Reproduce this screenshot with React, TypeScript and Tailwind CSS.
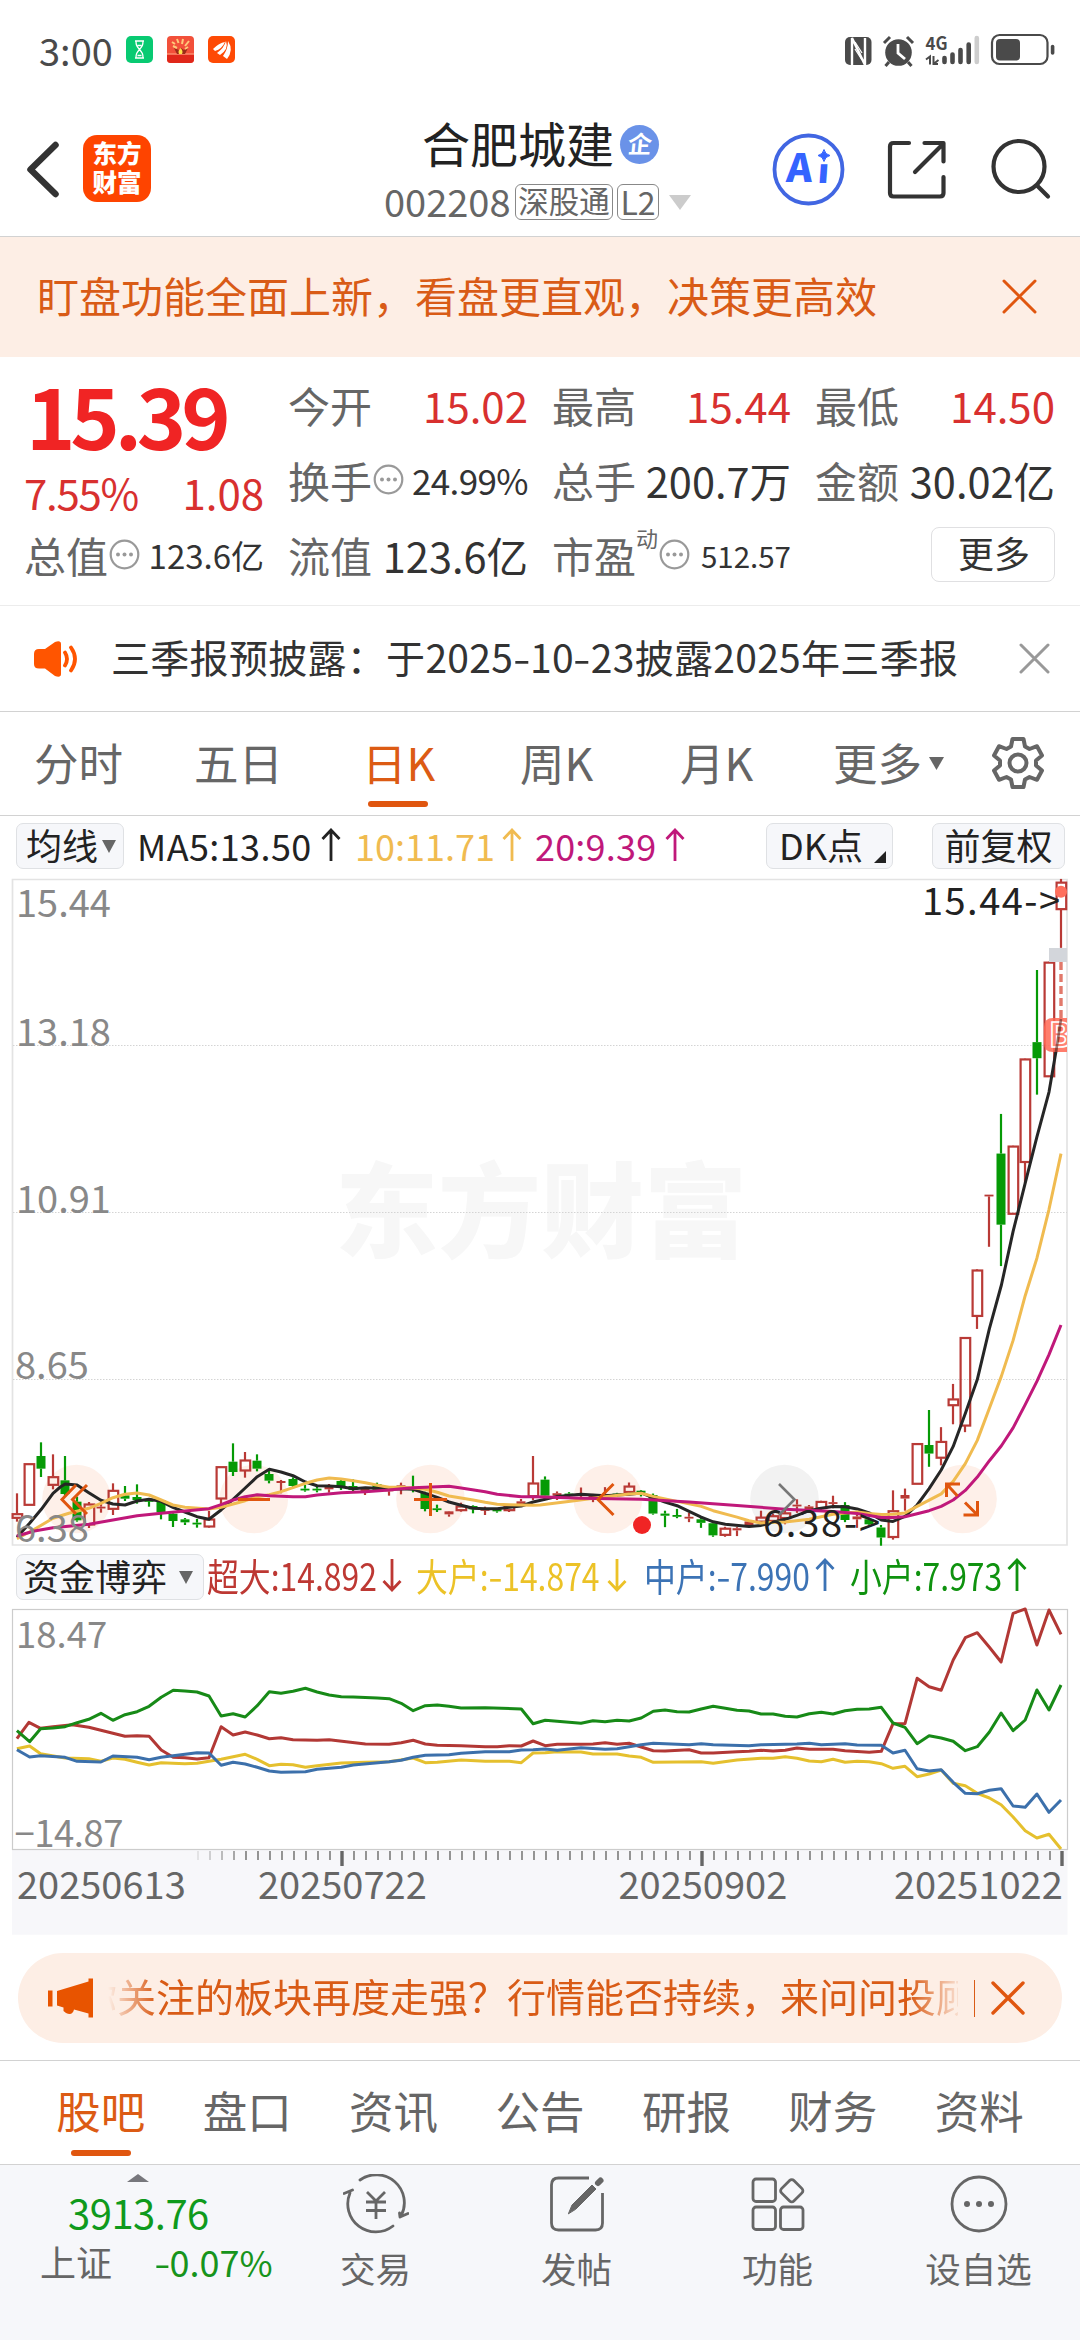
import type { ReactNode } from "react";

const ORANGE = "#e0560f";
const RED = "#b93a36";
const GREEN = "#069a06";
const STEP = 12;
const FIRST_X = 17;

type Candle = [kind: "r" | "g" | "R", high: number, top: number, bottom: number, low: number];

/* kind: r = hollow rise, R = solid rise, g = fall. Values are measured on two plot grids. */
const earlyCandles: Candle[] = [
  ["r", 280, 341, 355, 365], ["r", 191, 191, 316, 316], ["g", 127, 168, 206, 231], ["r", 163, 230, 256, 268],
  ["g", 168, 241, 282, 290], ["g", 290, 305, 361, 365], ["r", 306, 312, 375, 384], ["R", 308, 320, 325, 338],
  ["r", 250, 271, 328, 345], ["g", 258, 286, 296, 303], ["g", 253, 291, 300, 311], ["g", 296, 300, 304, 320],
  ["g", 297, 300, 337, 358], ["g", 337, 341, 363, 381], ["g", 354, 358, 367, 375], ["g", 357, 368, 373, 383],
  ["r", 333, 357, 381, 383], ["r", 200, 200, 297, 316], ["g", 130, 185, 216, 228], ["r", 156, 180, 213, 233],
  ["g", 163, 182, 206, 214], ["g", 213, 222, 242, 250], ["R", 240, 243, 249, 280], ["g", 232, 237, 258, 263],
  ["g", 255, 266, 271, 275], ["g", 258, 266, 271, 277], ["R", 252, 256, 268, 278], ["g", 240, 243, 258, 270],
  ["g", 238, 258, 270, 275], ["R", 262, 265, 278, 285], ["g", 248, 252, 270, 272], ["R", 262, 268, 274, 287],
  ["R", 248, 256, 266, 283], ["g", 227, 262, 266, 277], ["g", 275, 278, 327, 334], ["g", 314, 325, 330, 336],
  ["R", 333, 334, 343, 350], ["r", 308, 318, 332, 335], ["g", 316, 318, 328, 340], ["R", 320, 327, 332, 345],
  ["g", 325, 328, 334, 338], ["r", 316, 318, 332, 336], ["R", 297, 304, 314, 320], ["r", 168, 249, 290, 300],
];
const lateCandles: Candle[] = [
  ["g", 1166, 1175, 1220, 1224], ["R", 1208, 1213, 1220, 1232], ["g", 1210, 1214, 1220, 1225], ["R", 1197, 1214, 1221, 1225],
  ["R", 1215, 1220, 1228, 1238], ["R", 1196, 1216, 1221, 1225], ["g", 1212, 1214, 1219, 1222], ["r", 1183, 1193, 1211, 1215],
  ["g", 1204, 1206, 1212, 1222], ["g", 1214, 1218, 1270, 1273], ["g", 1262, 1270, 1276, 1308], ["g", 1257, 1274, 1279, 1283],
  ["R", 1268, 1279, 1284, 1294], ["g", 1278, 1286, 1296, 1310], ["g", 1294, 1297, 1331, 1335], ["r", 1307, 1311, 1331, 1335],
  ["R", 1308, 1311, 1317, 1333], ["R", 1288, 1292, 1304, 1308], ["r", 1262, 1280, 1294, 1296], ["r", 1270, 1276, 1292, 1296],
  ["r", 1260, 1268, 1284, 1300], ["R", 1230, 1245, 1250, 1268], ["R", 1246, 1250, 1260, 1268], ["r", 1234, 1236, 1256, 1260],
  ["R", 1220, 1238, 1243, 1255], ["g", 1238, 1246, 1288, 1294], ["R", 1273, 1278, 1286, 1310], ["g", 1281, 1286, 1300, 1302],
  ["g", 1302, 1309, 1337, 1360], ["r", 1205, 1262, 1337, 1343], ["R", 1200, 1218, 1228, 1262], ["r", 1073, 1074, 1188, 1188],
  ["g", 980, 1078, 1102, 1139], ["r", 1028, 1068, 1115, 1135], ["r", 907, 949, 968, 1020], ["r", 776, 777, 1025, 1042],
  ["r", 586, 588, 718, 753], ["R", 378, 377, 382, 523], ["g", 151, 262, 461, 577], ["r", 240, 241, 432, 432],
  ["r", -4, -3, 287, 345], ["g", -252, -50, -5, 97], ["r", -275, -274, 47, 47], ["r", -507, -498, -421, -314],
];

const earlyY = (v: number) => 1400 + v / 3;
const lateY = (v: number) => 1060 + v / 2.8;
const fundY = (v: number) => 1600 + v / 3;
const px = (v: number) => v / 2.904;

function series(early: number[], late: number[], ya: (v: number) => number, yb: (v: number) => number) {
  const out: string[] = [];
  for (let i = 0; i < early.length; i += 2) out.push(`${px(early[i]).toFixed(1)},${ya(early[i + 1]).toFixed(1)}`);
  for (let i = 0; i < late.length; i += 2) out.push(`${(540 + px(late[i])).toFixed(1)},${yb(late[i + 1]).toFixed(1)}`);
  return out.join(" ");
}

const ma5 = series(
  [49, 412, 86, 370, 120, 328, 154, 280, 175, 261, 189, 252, 224, 255, 258, 278, 293, 301, 328, 312, 363, 315, 398, 303, 433, 298, 468, 304, 502, 322, 537, 336, 572, 350, 607, 358, 642, 330, 677, 298, 712, 264, 747, 230, 782, 208, 816, 216, 851, 227, 887, 246, 921, 257, 956, 258, 991, 260, 1026, 266, 1061, 263, 1096, 265, 1130, 267, 1165, 266, 1200, 268, 1235, 280, 1270, 292, 1304, 306, 1339, 316, 1374, 325, 1409, 326, 1444, 326, 1479, 322, 1514, 318, 1548, 306],
  [15, 1230, 50, 1222, 119, 1216, 189, 1220, 259, 1216, 294, 1212, 329, 1226, 363, 1238, 398, 1248, 433, 1264, 468, 1280, 503, 1293, 538, 1300, 607, 1306, 642, 1303, 677, 1294, 712, 1286, 746, 1275, 782, 1262, 817, 1255, 851, 1250, 886, 1251, 921, 1257, 956, 1268, 991, 1288, 1025, 1292, 1060, 1278, 1095, 1246, 1130, 1200, 1165, 1148, 1200, 1082, 1235, 990, 1270, 895, 1305, 752, 1340, 630, 1374, 480, 1409, 345, 1443, 215, 1478, 90, 1494, 0, 1513, -107],
  earlyY, lateY);
const ma10 = series(
  [49, 416, 100, 388, 154, 355, 200, 340, 258, 325, 293, 310, 328, 293, 363, 283, 398, 279, 433, 285, 468, 300, 502, 315, 537, 322, 607, 327, 642, 322, 677, 312, 712, 302, 747, 290, 782, 284, 816, 275, 851, 263, 887, 250, 921, 240, 956, 234, 991, 237, 1026, 242, 1061, 248, 1096, 256, 1130, 262, 1165, 262, 1200, 264, 1235, 268, 1270, 277, 1304, 288, 1339, 294, 1374, 300, 1409, 307, 1444, 313, 1479, 314, 1548, 316],
  [0, 1246, 100, 1234, 189, 1223, 259, 1215, 294, 1213, 329, 1222, 398, 1236, 468, 1250, 503, 1262, 572, 1280, 607, 1290, 642, 1296, 712, 1294, 782, 1286, 851, 1272, 886, 1268, 921, 1266, 956, 1270, 991, 1273, 1025, 1272, 1060, 1268, 1095, 1250, 1165, 1215, 1200, 1180, 1235, 1130, 1270, 1065, 1305, 975, 1340, 885, 1374, 785, 1409, 660, 1443, 555, 1478, 418, 1513, 262],
  earlyY, lateY);
const ma20 = series(
  [49, 408, 100, 393, 154, 383, 258, 373, 328, 360, 398, 347, 468, 340, 537, 333, 607, 326, 642, 314, 677, 300, 712, 290, 747, 284, 782, 287, 851, 290, 887, 290, 921, 285, 991, 278, 1061, 275, 1130, 270, 1165, 266, 1200, 263, 1235, 262, 1304, 259, 1339, 264, 1409, 275, 1444, 283, 1514, 290, 1548, 290],
  [15, 1224, 119, 1227, 294, 1230, 433, 1238, 572, 1247, 712, 1258, 851, 1264, 921, 1270, 956, 1275, 991, 1281, 1025, 1281, 1060, 1279, 1130, 1262, 1165, 1250, 1200, 1232, 1235, 1205, 1270, 1168, 1305, 1122, 1340, 1080, 1374, 1030, 1409, 965, 1443, 900, 1478, 825, 1513, 742],
  earlyY, lateY);

const fundSmall = series(
  [49, 392, 86, 425, 118, 386, 154, 384, 189, 380, 224, 368, 258, 358, 293, 340, 328, 361, 363, 344, 398, 335, 433, 319, 468, 292, 503, 271, 537, 273, 572, 276, 607, 288, 642, 348, 677, 341, 712, 351, 747, 317, 782, 275, 816, 280, 851, 274, 887, 265, 921, 276, 956, 285, 991, 290, 1026, 291, 1096, 294, 1130, 296, 1165, 310, 1200, 332, 1235, 317, 1270, 315, 1304, 319, 1339, 324, 1409, 323, 1514, 327, 1548, 371],
  [15, 361, 119, 370, 154, 362, 189, 365, 224, 361, 259, 363, 294, 354, 329, 334, 363, 330, 398, 335, 433, 336, 468, 327, 503, 319, 538, 325, 572, 331, 607, 333, 642, 342, 677, 342, 712, 349, 746, 351, 782, 341, 817, 337, 851, 342, 886, 332, 921, 328, 956, 327, 991, 322, 1025, 369, 1060, 382, 1095, 431, 1130, 407, 1165, 414, 1200, 424, 1235, 452, 1270, 440, 1305, 396, 1339, 339, 1374, 392, 1409, 360, 1443, 270, 1478, 330, 1513, 255],
  fundY, fundY);
const fundHuge = series(
  [49, 416, 84, 367, 118, 385, 154, 380, 210, 374, 258, 382, 328, 400, 363, 409, 398, 407, 433, 409, 468, 450, 503, 472, 537, 473, 572, 477, 607, 473, 642, 380, 677, 405, 712, 396, 747, 405, 782, 416, 816, 413, 851, 419, 921, 421, 956, 419, 1061, 432, 1130, 433, 1165, 428, 1200, 421, 1235, 432, 1270, 436, 1339, 437, 1409, 440, 1444, 440, 1479, 437, 1514, 438, 1548, 423],
  [15, 437, 50, 433, 119, 433, 154, 432, 189, 428, 224, 433, 259, 430, 294, 441, 329, 452, 363, 453, 433, 449, 468, 459, 503, 459, 572, 455, 607, 454, 642, 451, 677, 453, 712, 451, 746, 444, 782, 448, 851, 448, 886, 452, 956, 457, 991, 454, 1025, 371, 1060, 371, 1095, 235, 1130, 260, 1165, 271, 1200, 180, 1235, 113, 1270, 98, 1305, 142, 1339, 186, 1374, 40, 1409, 27, 1443, 135, 1478, 30, 1513, 103],
  fundY, fundY);
const fundLarge = series(
  [49, 446, 86, 438, 118, 461, 189, 474, 258, 476, 293, 484, 328, 474, 363, 478, 398, 487, 433, 495, 468, 488, 537, 491, 572, 490, 607, 484, 642, 478, 712, 463, 747, 478, 782, 497, 816, 493, 851, 494, 887, 502, 921, 497, 991, 489, 1061, 487, 1130, 485, 1200, 474, 1235, 488, 1270, 487, 1339, 480, 1409, 484, 1479, 484, 1514, 488, 1548, 459],
  [15, 458, 50, 455, 119, 456, 154, 462, 224, 462, 259, 468, 294, 472, 329, 487, 468, 485, 503, 490, 572, 480, 642, 475, 677, 475, 712, 470, 746, 475, 782, 483, 817, 485, 851, 478, 886, 487, 921, 484, 956, 485, 991, 491, 1025, 505, 1060, 499, 1095, 530, 1130, 522, 1165, 510, 1200, 550, 1235, 557, 1270, 580, 1305, 594, 1339, 614, 1374, 651, 1409, 692, 1443, 714, 1478, 703, 1513, 747],
  fundY, fundY);
const fundMid = series(
  [49, 449, 86, 471, 118, 467, 189, 472, 224, 484, 293, 486, 328, 468, 398, 472, 433, 479, 468, 472, 572, 458, 607, 459, 642, 496, 677, 487, 712, 492, 747, 502, 782, 513, 816, 517, 887, 515, 921, 508, 991, 502, 1026, 495, 1130, 485, 1165, 481, 1200, 472, 1235, 466, 1304, 464, 1339, 460, 1409, 455, 1479, 455, 1514, 450, 1548, 449],
  [15, 447, 50, 451, 119, 443, 189, 448, 224, 446, 294, 434, 329, 430, 433, 434, 468, 431, 503, 434, 607, 437, 642, 434, 746, 432, 782, 430, 817, 434, 886, 431, 921, 435, 991, 436, 1025, 459, 1060, 451, 1095, 506, 1130, 513, 1165, 509, 1200, 547, 1235, 580, 1270, 581, 1305, 571, 1339, 566, 1374, 618, 1409, 622, 1443, 582, 1478, 637, 1513, 600],
  fundY, fundY);

function CandleMark({ c, index }: { c: Candle; index: number }) {
  const y = index < 44 ? earlyY : lateY;
  const x = FIRST_X + STEP * index;
  const [kind, high, top, bottom, low] = c;
  const color = kind === "g" ? GREEN : RED;
  return (
    <g stroke={color} strokeWidth={2.2}>
      {high < top && <line x1={x} x2={x} y1={y(high)} y2={y(top)} />}
      {low > bottom && <line x1={x} x2={x} y1={y(bottom)} y2={y(low)} />}
      {kind === "r" ? (
        <rect x={x - 4.4} width={9.6} y={y(top) + 0.5} height={y(bottom) - y(top) - 1} fill="none" />
      ) : (
        <rect x={x - 4.5} width={9} y={y(top)} height={Math.max(1.8, y(bottom) - y(top))} fill={color} stroke="none" />
      )}
    </g>
  );
}

function PriceChart() {
  return (
    <svg width={1080} height={670} viewBox="0 878 1080 670" className="block">
      <text x={541} y={1250} textAnchor="middle" fontSize={103} fontWeight={900} fill="#f7f7f7">东方财富</text>
      <path d="M12.5 879.5H1067V1545H12.5Z" fill="none" stroke="#e3e3e3" strokeWidth={1.7} />
      {[1045.5, 1212.5, 1379.5].map((y) => (
        <line key={y} x1={13} x2={1067} y1={y} y2={y} stroke="#d4d4d4" strokeWidth={1} strokeDasharray="1.5 1.5" />
      ))}
      {[76.5, 253.8, 430.5, 607.8, 962.5].map((x) => (
        <circle key={x} cx={x} cy={1499} r={34.3} fill="#fef0e9" />
      ))}
      <circle cx={784.5} cy={1499} r={34.3} fill="#f2f2f2" />
      <g fontSize={38} fill="#888">
        <text x={16} y={916.5}>15.44</text>
        <text x={16} y={1046}>13.18</text>
        <text x={16} y={1213}>10.91</text>
        <text x={15} y={1379}>8.65</text>
      </g>
      {[...earlyCandles, ...lateCandles].map((c, i) => (
        <CandleMark key={i} c={c} index={i} />
      ))}
      <g fill="none" strokeWidth={3} strokeLinejoin="round">
        <polyline points={ma5} stroke="#262626" />
        <polyline points={ma10} stroke="#f0bb50" />
        <polyline points={ma20} stroke="#c0187a" />
      </g>
      <text x={15} y={1541.5} fontSize={38} fill="#888">6.38</text>
      <circle cx={1061} cy={891.7} r={6} fill="#ff6f5c" />
      <rect x={1049} y={948} width={18} height={14} fill="#d3d6db" />
      <line x1={1061} x2={1061} y1={962} y2={1022} stroke="#e2796b" strokeWidth={3.4} strokeDasharray="8 4" />
      <path d="M1067 1018H1053q-9 0-9 9v16q0 9 9 9h14Z" fill="#ff6652" fillOpacity={0.85} />
      <svg x={1044} y={1016} width={23} height={38} overflow="hidden">
        <text x={5} y={31} fontSize={33} fontWeight={700} fill="#ff8473" stroke="#fff" strokeWidth={1.6}>B</text>
      </svg>
      <path d="M1061 1019L1056 1052" stroke="#5a2a26" strokeOpacity={0.6} strokeWidth={2.6} />
      <text x={922} y={914.5} fontSize={38} fill="#222" textLength={138}>15.44-&gt;</text>
      <text x={763} y={1536.5} fontSize={38} fill="#222" textLength={117}>6.38-&gt;</text>
      <circle cx={642} cy={1525} r={9} fill="#f02424" />
      <g fill="none" stroke={ORANGE} strokeWidth={3}>
        <path d="M76 1485L62 1499.500L76 1514M87 1485L72.500 1499.500L87 1514M238 1499.500H270M414 1499.500H447M430.500 1483V1516M613.500 1484L598 1499.500L613.500 1515" />
        <path d="M946.500 1497V1484H960M947 1484.500L957.500 1496M977.500 1501V1515H963.500M976.500 1514L965 1502.500" />
      </g>
      <path d="M779 1484L794.500 1499.500L779 1515" fill="none" stroke="#777" strokeWidth={2.6} />
    </svg>
  );
}

function FundChart() {
  const ticks = Array.from({ length: 73 }, (_, k) => k);
  return (
    <svg width={1080} height={335} viewBox="0 1600 1080 335" className="block">
      <rect x={12} y={1850} width={1055.500} height={84.700} fill="#f7f7fa" />
      <rect x={12.500} y={1609.500} width={1055} height={240} fill="#fff" stroke="#ccc" strokeWidth={1.2} />
      <g fontSize={36.500} fill="#888">
        <text x={16} y={1648}>18.47</text>
        <text x={14.500} y={1847} textLength={109}>−14.87</text>
      </g>
      <g fill="none" strokeWidth={3} strokeLinejoin="round">
        <polyline points={fundLarge} stroke="#e5c02e" />
        <polyline points={fundHuge} stroke="#b23835" />
        <polyline points={fundSmall} stroke="#178a17" />
        <polyline points={fundMid} stroke="#3c70ab" />
      </g>
      {ticks.map((k) => {
        const major = k === 12 || k === 42 || k === 72;
        return (
          <line key={k} x1={198 + 12 * k} x2={198 + 12 * k} y1={1851} y2={major ? 1866 : 1860} stroke={major ? "#666" : "#888"} strokeWidth={major ? 3.4 : 1.8} opacity={k < 4 ? 0.2 + k * 0.2 : 1} />
        );
      })}
      <g fontSize={38} fill="#666">
        <text x={17} y={1898.500}>20250613</text>
        <text x={258} y={1898.500}>20250722</text>
        <text x={618.500} y={1898.500}>20250902</text>
        <text x={894} y={1898.500}>20251022</text>
      </g>
    </svg>
  );
}

/* Hyphens are drawn as wide as the other signs of the numeral set. */
function Wide({ text }: { text: string }) {
  const parts = text.split("-");
  return (
    <>
      {parts.map((p, i) => (
        <span key={i}>
          {i > 0 && <span className="mx-[1.500px] inline-block scale-x-[1.3]">-</span>}
          {p}
        </span>
      ))}
    </>
  );
}

function Arrow({ down = false }: { down?: boolean }) {
  return (
    <svg width={20} height={34} viewBox="0 0 20 34" className={down ? "shrink-0 rotate-180" : "shrink-0"} fill="none" stroke="currentColor" strokeWidth={2.8}>
      <path d="M10 33V2M1.500 11L10 2L18.500 11" />
    </svg>
  );
}

function Cross({ size, width = 3, color }: { size: number; width?: number; color: string }) {
  return (
    <svg width={size} height={size} viewBox={`0 0 ${size} ${size}`} className="shrink-0" stroke={color} strokeWidth={width} strokeLinecap="round">
      <path d={`M2 2L${size - 2} ${size - 2}M${size - 2} 2L2 ${size - 2}`} />
    </svg>
  );
}

function Dots() {
  return (
    <svg width={31} height={31} viewBox="0 0 31 31" className="shrink-0">
      <circle cx={15.500} cy={15.500} r={13.800} fill="none" stroke="#999" strokeWidth={2.2} />
      {[9, 15.500, 22].map((x) => (
        <circle key={x} cx={x} cy={15.500} r={2} fill="#999" />
      ))}
    </svg>
  );
}

function Caret({ className }: { className: string }) {
  return (
    <svg viewBox="0 0 14 13" preserveAspectRatio="none" className={className}>
      <path d="M0 0H14L7 13Z" fill="currentColor" />
    </svg>
  );
}

function StatusBar() {
  return (
    <div className="flex h-[100px] items-center justify-between pl-[39px] pr-[25px] text-[#4a4a4a]">
      <div className="flex items-center">
        <span className="w-[87px] text-[38px] leading-[50px]">3:00</span>
        <svg width={110} height={28} viewBox="0 0 110 28">
          <rect width={27} height={27} rx={5} fill="#08ca72" />
          <path d="M9 5h9M9 22h9M10 5c0 4 .5 5 3.500 8.500C10.500 17 10 18 10 22M17 5c0 4-.5 5-3.500 8.500C16.500 17 17 18 17 22M11.500 9.500h4M11.500 19.500h4" fill="none" stroke="#fff" strokeWidth={1.300} />
          <rect x={41} width={27} height={27} rx={4} fill="#f2503a" />
          <path d="M41 18.500h27v5q0 3.500-4 3.500h-19q-4 0-4-3.500Z" fill="#e0271a" />
          <path d="M41 18h27" stroke="#ff9a7a" strokeWidth={1.200} />
          <path d="M48 12l5 2 2-2 3 2 4-2-3 6h-8Z" fill="#9c2a18" />
          <path d="M54.500 12q3 3 1.500 6h-3q-1.500-3 1.500-6Z" fill="#ffe04a" />
          <path d="M46 6l3 2M51 3l1.500 4M57 3l-1 5M63 5l-4 5M47 10l4 2M62 11l-3 2" stroke="#ffc97a" strokeWidth={2} />
          <rect x={82} width={27} height={27} rx={5} fill="#fe4a05" />
          <path d="M87 13q6-6 12-7-3 7-10 9ZM91 17q7-5 9-12 3 8-6 14ZM97 20q5-7 5-15 6 9-1 18Z" fill="#fff" />
        </svg>
      </div>
      <svg width={212} height={36} viewBox="843 33 212 36">
        <rect x={845} y={38} width={26.500} height={28} rx={5} fill="#4a4a4a" />
        <path d="M852 66V39l13 27V39" fill="none" stroke="#fff" strokeWidth={2.400} />
        <path d="M855 43l7 11M855 50l7 11" stroke="#fff" strokeWidth={1.300} />
        <circle cx={898.500} cy={53.500} r={13.300} fill="#4a4a4a" />
        <path d="M884 44l6-6M913 44l-6-6M889 63l-3.500 4M908 63l3.500 4" stroke="#4a4a4a" strokeWidth={3} />
        <path d="M898 45v9l7 6" fill="none" stroke="#fff" strokeWidth={2.800} />
        <text x={925.500} y={50.500} fontSize={18} fontWeight={700} fill="#4a4a4a" textLength={22} lengthAdjust="spacingAndGlyphs">4G</text>
        <path d="M926 60.500l4-3v8M938 65l-4.500 0v-8M933.500 65l5-4" fill="none" stroke="#4a4a4a" strokeWidth={2} />
        <g strokeLinecap="round" strokeWidth={4.600} stroke="#4a4a4a">
          <path d="M944.500 59v4M952.500 55.500v7.500M960.500 51v12M968.700 45.500v17.500" />
          <path d="M976.800 39v24" stroke="#cdcdcd" />
        </g>
        <rect x={992} y={36} width={55.500} height={29} rx={7.500} fill="none" stroke="#4a4a4a" strokeWidth={2.200} />
        <rect x={996} y={40} width={24} height={21.500} rx={4} fill="#4a4a4a" />
        <path d="M1052.600 47.500v6.500" stroke="#4a4a4a" strokeWidth={3.600} strokeLinecap="round" />
      </svg>
    </div>
  );
}

function Header() {
  return (
    <header className="flex h-[137px] border-b border-[#d2d2d2]">
      <div className="flex w-[384px] items-start pl-[26px] pt-[35px]">
        <svg width={34} height={68} viewBox="0 0 34 68">
          <path d="M29.500 10L4.500 34.500L29.500 59" fill="none" stroke="#333" strokeWidth={6.500} strokeLinecap="round" strokeLinejoin="round" />
        </svg>
        <div className="ml-[23px] flex h-[67px] w-[68px] flex-col items-center justify-center rounded-[14px] bg-[#fe4400] pb-[3px] text-[24.500px] font-black leading-[29px] text-white">
          <span>东方</span>
          <span>财富</span>
        </div>
      </div>
      <div className="w-[384px]">
        <div className="flex h-[74px] items-center pl-[38px] pt-[10px]">
          <span className="text-[48px] leading-[60px] text-[#222]">合肥城建</span>
          <span className="ml-[6px] mt-[4px] flex h-[39px] w-[39px] items-center justify-center rounded-full bg-[#6a92e8] pb-[3px] text-[24px] font-bold leading-none text-white">
            <span className="-skew-x-6">企</span>
          </span>
        </div>
        <div className="mt-[2px] flex h-[52px] items-center text-[#666]">
          <span className="w-[131px] text-[38px] leading-[50px] pb-[2px]">002208</span>
          <span className="flex h-[36px] w-[98px] items-center justify-center rounded-[6px] border-[1.500px] border-[#888] pb-[3px] text-[30.500px] leading-none">深股通</span>
          <span className="ml-[4px] flex h-[36px] w-[42px] items-center justify-center rounded-[6px] border-[1.500px] border-[#888] pb-[3px] text-[32px] leading-none">L2</span>
          <Caret className="ml-[10px] h-[15px] w-[22px] text-[#ccc]" />
        </div>
      </div>
      <svg width={290} height={90} viewBox="768 124 290 90" className="mt-[24px]">
        <circle cx={808.500} cy={169.500} r={34} fill="none" stroke="#4166e2" strokeWidth={3.800} />
        <text x={798.500} y={182.500} fontSize={39} fontWeight={900} fill="#3564ff" transform="skewX(-4)">A</text>
        <text x={830} y={183.500} fontSize={34} fontWeight={900} fill="#3564ff" transform="skewX(-4)">ı</text>
        <path d="M824 149.500q1 5 6 6q-5 1-6 6q-1-5-6-6q5-1 6-6Z" fill="#3564ff" stroke="#3564ff" strokeWidth={1} strokeLinejoin="round" />
        <g fill="none" stroke="#333" strokeWidth={4.200} strokeLinecap="round" strokeLinejoin="round">
          <path d="M909 143H893.500q-3.500 0-3.500 3.500V193q0 3.500 3.500 3.500H940q3.500 0 3.500-3.500V177M924.500 143H943.500V161.500M943 144L915 172" />
          <circle cx={1019} cy={166.500} r={25.500} />
          <path d="M1037.500 186L1048 196.500" />
        </g>
      </svg>
    </header>
  );
}

function Stat({ label, value, tone = "text-[#333]", size = "text-[42px]", icon, sup }: { label: string; value: string; tone?: string; size?: string; icon?: boolean; sup?: string }) {
  return (
    <div className="flex h-[75px] items-center whitespace-nowrap">
      <span className="-ml-[1px] text-[42px] leading-[60px] text-[#666]">{label}</span>
      {sup && <span className="mb-[36px] text-[22px] leading-none text-[#666]">{sup}</span>}
      {icon && <span className="ml-[1px]"><Dots /></span>}
      <span className={`ml-auto leading-[60px] ${tone} ${size}`}>{value}</span>
    </div>
  );
}

function Quote() {
  return (
    <section className="grid h-[249px] grid-cols-[239px_239px_238px_239px] gap-x-[25px] border-b border-[#ececec] pl-[25px] pt-[10px]">
      <div className="flex flex-col">
        <div className="h-[92px] pl-[1px] text-[84px] font-bold leading-[94px] tracking-[-5.200px] text-[#f02424]">15.39</div>
        <div className="flex h-[58px] items-center justify-between pt-[8px] text-[42px] leading-[50px] text-[#d8302f]">
          <span className="-ml-[1px] tracking-[-1.300px]">7.55%</span>
          <span>1.08</span>
        </div>
        <Stat label="总值" value="123.6亿" icon size="text-[33px]" />
      </div>
      <div>
        <Stat label="今开" value="15.02" tone="text-[#d8302f]" />
        <Stat label="换手" value="24.99%" icon size="text-[35px] tracking-[-0.600px]" />
        <Stat label="流值" value="123.6亿" size="text-[41.500px]" />
      </div>
      <div>
        <Stat label="最高" value="15.44" tone="text-[#d8302f]" />
        <Stat label="总手" value="200.7万" size="text-[41.500px]" />
        <Stat label="市盈" value="512.57" icon sup="动" size="text-[29.500px]" />
      </div>
      <div>
        <Stat label="最低" value="14.50" tone="text-[#d8302f]" />
        <Stat label="金额" value="30.02亿" size="text-[41.500px]" />
        <div className="flex h-[75px] items-center justify-end">
          <span className="flex h-[55px] w-[124px] items-center justify-center rounded-[8px] border-[1.500px] border-[#e0e0e2] pb-[5px] pl-[2px] text-[36px] leading-none text-[#333]">更多</span>
        </div>
      </div>
    </section>
  );
}

function PeriodTabs() {
  return (
    <nav className="flex h-[104px] border-b border-[#d2d2d2] pl-[34px] pt-[18px] text-[44.500px] leading-[64px] text-[#666]">
      <span className="w-[160px]">分时</span>
      <span className="w-[168px]">五日</span>
      <span className="w-[158px] text-[#dc5b14]">
        日K
        <span className="ml-[6px] mt-[7px] block h-[6px] w-[60px] rounded-full bg-[#e0560f]" />
      </span>
      <span className="w-[160px]">周K</span>
      <span className="w-[153px]">月K</span>
      <span className="w-[96px]">更多</span>
      <Caret className="mt-[27px] h-[13px] w-[15px] text-[#666]" />
      <svg width={56} height={56} viewBox="-28 -28 56 56" className="ml-[46px] mt-[5px]" fill="none" stroke="#666" strokeWidth={4}>
        <path d="M-5.500-24H5.500L7-16.500L11.500-14L19-16.800L24-7.500L18-2.500V2.500L24 7.500L19 16.800L11.500 14L7 16.500L5.500 24H-5.500L-7 16.500L-11.500 14L-19 16.800L-24 7.500L-18 2.500V-2.500L-24-7.500L-19-16.800L-11.500-14L-7-16.500Z" strokeLinejoin="round" />
        <circle r={8.500} />
      </svg>
    </nav>
  );
}

function Chip({ className, children }: { className: string; children: ReactNode }) {
  return (
    <span className={`flex h-[46px] shrink-0 items-center rounded-[7px] border-[1.500px] border-[#dfe1e4] bg-[#f6f7fa] pb-[4px] text-[36px] leading-none text-[#222] ${className}`}>{children}</span>
  );
}

function MaRow() {
  return (
    <div className="flex h-[62px] items-center whitespace-nowrap pb-[2px] pl-[16px] text-[36px] leading-[50px]">
      <Chip className="w-[108px] pl-[9px] text-[35px]">
        均线
        <Caret className="ml-[4px] mt-[4px] h-[13px] w-[14px] text-[#666]" />
      </Chip>
      <span className="flex w-[217px] items-center pb-[3px] pl-[13px] text-[#222]">
        <span className="w-[184px] tracking-[0.400px]">MA5:13.50</span>
        <Arrow />
      </span>
      <span className="flex w-[181px] items-center pb-[3px] pl-[14px] text-[#f0bb50]">
        <span className="w-[148px]">10:11.71</span>
        <Arrow />
      </span>
      <span className="flex w-[244px] items-center pb-[3px] pl-[13px] text-[#c0187a]">
        <span className="w-[130px] tracking-[0.200px]">20:9.39</span>
        <Arrow />
      </span>
      <Chip className="w-[127px] pl-[12px]">
        DK点
        <svg width={12} height={12} className="ml-[11px] mt-[25px]">
          <path d="M12 0V12H0Z" fill="#222" />
        </svg>
      </Chip>
      <Chip className="ml-[39px] w-[133px] justify-center">前复权</Chip>
    </div>
  );
}

function Fund({ text, down, box, label }: { text: string; down?: boolean; box: string; label: string }) {
  return (
    <span className={`flex items-center ${box}`}>
      <span className={label}>
        <span className="inline-block origin-left scale-x-[0.85]">
          <Wide text={text} />
        </span>
      </span>
      <Arrow down={down} />
    </span>
  );
}

function FundRow() {
  return (
    <div className="flex h-[52px] items-start whitespace-nowrap pl-[16px] pt-[6px]">
      <Chip className="w-[188px] pl-[6px]">
        资金博弈
        <Caret className="ml-[12px] mt-[4px] h-[13px] w-[14px] text-[#666]" />
      </Chip>
      <div className="-mt-[2px] flex h-[46px] items-center text-[37.500px] leading-[46px]">
        <Fund text="超大:14.892" down box="w-[212px] pl-[3px] text-[#bd3833]" label="w-[175px]" />
        <Fund text="大户:-14.874" down box="w-[228px] text-[#ecc227]" label="w-[191px]" />
        <Fund text="中户:-7.990" box="w-[206px] text-[#3c73b5]" label="w-[171px]" />
        <Fund text="小户:7.973" box="text-[#0f920f]" label="w-[157px]" />
      </div>
    </div>
  );
}

function NavItem({ label, children }: { label: string; children: ReactNode }) {
  return (
    <div className="flex w-[201px] flex-col items-center pt-[9px]">
      <svg width={66} height={60} viewBox="-33 -30 66 60" fill="none" stroke="#666" strokeWidth={2.800} strokeLinecap="round" strokeLinejoin="round">
        {children}
      </svg>
      <span className="mt-[9px] text-[35.500px] leading-[50px] text-[#666]">{label}</span>
    </div>
  );
}

export default function App() {
  return (
    <div className="h-[2340px] w-[1080px] overflow-hidden bg-white [font-family:'Noto_Sans_CJK_SC','Noto_Sans',sans-serif]">
      <StatusBar />
      <Header />
      <div className="flex h-[120px] items-center justify-between bg-[#fdeee5] pl-[37px] pr-[43px]">
        <span className="pb-[5px] text-[42px] leading-[60px] text-[#d95b16]">盯盘功能全面上新，看盘更直观，决策更高效</span>
        <span className="pb-[2px]">
          <Cross size={35} color="#e0560f" />
        </span>
      </div>
      <Quote />
      <div className="flex h-[106px] items-center border-b border-[#d2d2d2] pl-[33px] pr-[30px]">
        <svg width={46} height={38} viewBox="0 0 46 38">
          <path d="M6 9H12L22 2Q28 0 28 4V34Q28 38 22 36L12 28.500H6Q1 28.500 1 24V14Q1 9 6 9Z" fill="#ff5500" />
          <path d="M32 12.500Q36 19 32 25.500M38 7.500Q46 19 38 30.500" fill="none" stroke="#ff5500" strokeWidth={3.800} strokeLinecap="round" />
        </svg>
        <span className="ml-[32px] whitespace-nowrap pb-[6px] text-[39px] leading-[60px] tracking-[0.300px] text-[#333]">
          <Wide text="三季报预披露：于2025-10-23披露2025年三季报" />
        </span>
        <span className="ml-auto">
          <Cross size={31} color="#999" />
        </span>
      </div>
      <PeriodTabs />
      <MaRow />
      <PriceChart />
      <FundRow />
      <FundChart />
      <div className="mx-[18px] mt-[18px] flex h-[90px] items-center rounded-full bg-[#fdeee5] pl-[29px] pr-[37px]">
        <svg width={47} height={40} viewBox="0 0 47 40" fill="#e85400">
          <path d="M1 12.500h4.500v16H1ZM10 13L41.500 3.500V0.500H46V39.500H41.500V35.500L27 31.500Q25.500 38 19 35L16.500 33V29.500L10 27.500Z" />
        </svg>
        <div className="ml-[14px] flex w-[850px] overflow-hidden whitespace-nowrap pb-[7px] text-[39px] leading-[60px] text-[#d95b16] [mask-image:linear-gradient(to_right,transparent,black_48px,black_802px,transparent_856px)]">
          <span className="-ml-[30px]">你关注的板块再度走强？行情能否持续，来问问投顾</span>
        </div>
        <span className="ml-[16px] mr-[16px] h-[37px] w-px bg-[#d95b16]" />
        <Cross size={34} width={3.400} color="#e0560f" />
      </div>
      <nav className="mt-[17px] flex h-[105px] border-y border-[#d2d2d2] px-[27.500px] pt-[17px] text-[44.500px] leading-[64px] text-[#666]">
        {["股吧", "盘口", "资讯", "公告", "研报", "财务", "资料"].map((t, i) => (
          <span key={t} className={i === 0 ? "flex-1 text-center text-[#dc5b14]" : "flex-1 text-center"}>
            {t}
            {i === 0 && <span className="mx-auto mt-[8px] block h-[6px] w-[60px] rounded-full bg-[#e0560f]" />}
          </span>
        ))}
      </nav>
      <footer className="flex h-[176px] bg-[#f6f7fa]">
        <div className="w-[275px]">
          <svg width={22} height={8} viewBox="0 0 22 8" className="ml-[127px] mt-[9px] block">
            <path d="M0 8L11 0L22 8Z" fill="#77777c" />
          </svg>
          <div className="mt-[3px] pl-[68px] text-[40px] leading-[54px] tracking-[-0.500px] text-[#0f9a1c]">3913.76</div>
          <div className="-mt-[1px] flex items-center leading-[46px]">
            <span className="ml-[40px] w-[114px] text-[36px] text-[#666]">上证</span>
            <span className="text-[36px] text-[#17941c]">
              <Wide text="-0.07%" />
            </span>
          </div>
        </div>
        <NavItem label="交易">
          <path d="M-16-24A28 28 0 0 1 25 12M24 13L32 9.500M24 13L23.500 9M17 22A28 28 0 0 1-26-11M-23.500-14L-32-10.500" />
          <path d="M-9-12L0-3L9-12M0-3V15M-10-2H10M-10 6.500H10" strokeLinecap="butt" strokeWidth={2.800} />
        </NavItem>
        <NavItem label="发帖">
          <path d="M12-26H-18.500q-7 0-7 7V19q0 7 7 7H18.500q7 0 7-7V-11" strokeLinecap="butt" />
          <path d="M-8.500 9.500L-5 1L15-19L19-15L-1 5Z" fill="#666" strokeWidth={1} />
          <path d="M21-21L23.500-23.500" strokeWidth={6} />
        </NavItem>
        <NavItem label="功能">
          <rect x={-25} y={-25} width={22.500} height={22.500} rx={3} />
          <rect x={-25} y={3} width={22.500} height={22.500} rx={3} />
          <rect x={2.500} y={3} width={22.500} height={22.500} rx={3} />
          <rect x={5} y={-22} width={17.500} height={17.500} rx={3} transform="rotate(45 13.750 -13.250)" />
        </NavItem>
        <NavItem label="设自选">
          <circle r={27} />
          <g fill="#666" stroke="none">
            <circle cx={-12} r={3} />
            <circle r={3} />
            <circle cx={12} r={3} />
          </g>
        </NavItem>
      </footer>
    </div>
  );
}
